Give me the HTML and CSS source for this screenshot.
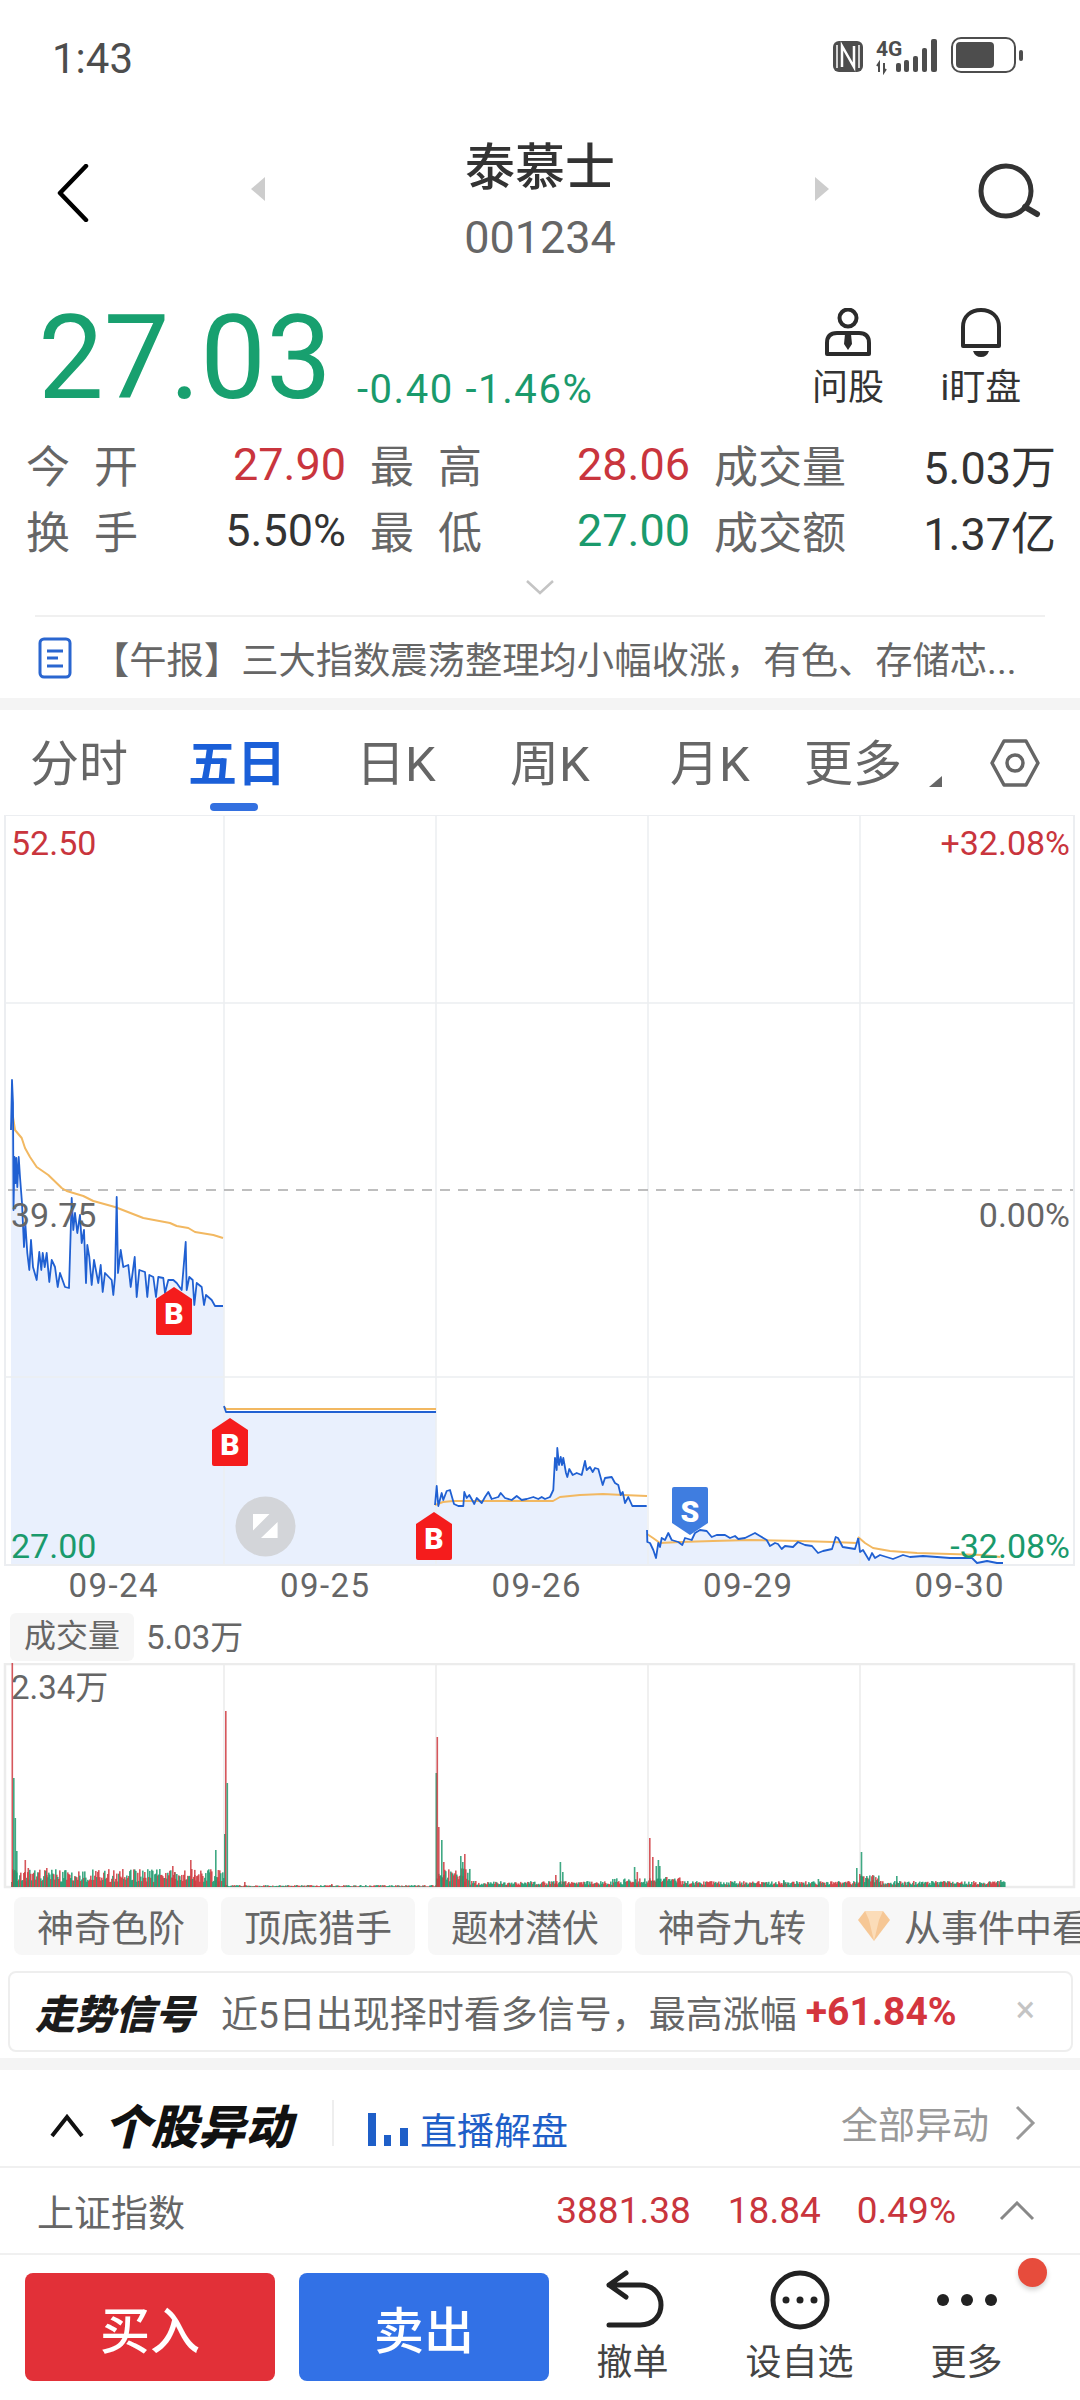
FILE: index.html
```html
<!DOCTYPE html>
<html lang="zh-CN">
<head>
    <meta charset="UTF-8">
    <meta name="viewport" content="width=device-width, initial-scale=1.0">
    <title>泰慕士 001234</title>
    <link rel="stylesheet" href="styles.css">
</head>
<body>
    <div class="status-bar">
        <span class="status-time">1:43</span>
        <svg class="status-icons" width="194" height="40" viewBox="830 36 194 40">
            <rect x="834" y="42" width="30" height="31" rx="6" fill="#4d4d4d"/>
            <path d="M838 46V69M860 46V69" stroke="#fff" stroke-width="1.5"/>
            <path d="M843 68V47L855 68V47" fill="none" stroke="#fff" stroke-width="2.5"/>
            <text x="877" y="57" class="status-4g">4G</text>
            <path d="M880 73V64l-2 3M885 64v9l2-3" fill="none" stroke="#4d4d4d" stroke-width="2"/>
            <g fill="#4d4d4d">
                <rect x="897" y="64" width="5" height="9" rx="2"/>
                <rect x="905" y="61" width="5" height="12" rx="2"/>
                <rect x="914" y="57" width="5" height="16" rx="2"/>
                <rect x="923" y="49" width="5" height="24" rx="2"/>
                <rect x="932" y="40" width="6" height="33" rx="2"/>
                <rect x="957" y="43" width="38" height="26" rx="4"/>
                <rect x="1020" y="51" width="4" height="11" rx="2"/>
            </g>
            <rect x="953" y="39" width="63" height="34" rx="9" fill="none" stroke="#4d4d4d" stroke-width="2"/>
        </svg>
    </div>

    <div class="title-bar">
        <svg class="back-icon" width="32" height="58" viewBox="0 0 32 58"><path d="M29 2L3 29L29 56" fill="none" stroke="#000" stroke-width="4.5" stroke-linecap="round" stroke-linejoin="round"/></svg>
        <div class="title-center">
            <span class="tri-left"></span>
            <div class="title-text">
                <div class="stock-name">泰慕士</div>
                <div class="stock-code">001234</div>
            </div>
            <span class="tri-right"></span>
        </div>
        <svg class="search-icon" width="66" height="60" viewBox="0 0 66 60"><circle cx="29" cy="29" r="25" fill="none" stroke="#333" stroke-width="5"/><path d="M48 45L60 52" stroke="#333" stroke-width="6" stroke-linecap="round"/></svg>
    </div>

    <div class="price-row">
        <span class="price">27.03</span>
        <span class="price-change">-0.40 -1.46%</span>
        <div class="price-action ask">
            <svg width="48" height="50" viewBox="0 0 48 50">
                <circle cx="24" cy="10" r="8.5" fill="none" stroke="#2b2b2b" stroke-width="4"/>
                <path d="M3 46V35Q3 25 13 25H35Q45 25 45 35V46Z" fill="none" stroke="#2b2b2b" stroke-width="4" stroke-linejoin="round"/>
                <path d="M21 26H27L28 36L24 42L20 36Z" fill="#2b2b2b"/>
            </svg>
            <span>问股</span>
        </div>
        <div class="price-action bell">
            <svg width="40" height="50" viewBox="0 0 40 50">
                <path d="M2 38V19C2 8 10 2 20 2S38 8 38 19V38Z" fill="none" stroke="#2b2b2b" stroke-width="4" stroke-linejoin="round"/>
                <path d="M12 43H28Q26 49 20 49T12 43Z" fill="#2b2b2b"/>
            </svg>
            <span>i盯盘</span>
        </div>
    </div>

    <div class="stats">
        <div class="stat"><span class="stat-label spaced">今 开</span><span class="stat-value red">27.90</span></div>
        <div class="stat"><span class="stat-label spaced">最 高</span><span class="stat-value red">28.06</span></div>
        <div class="stat"><span class="stat-label">成交量</span><span class="stat-value">5.03万</span></div>
        <div class="stat"><span class="stat-label spaced">换 手</span><span class="stat-value">5.50%</span></div>
        <div class="stat"><span class="stat-label spaced">最 低</span><span class="stat-value green">27.00</span></div>
        <div class="stat"><span class="stat-label">成交额</span><span class="stat-value">1.37亿</span></div>
    </div>

    <div class="expand">
        <svg width="30" height="16" viewBox="0 0 30 16"><path d="M2 2L15 14L28 2" fill="none" stroke="#c4c4c4" stroke-width="2.5"/></svg>
    </div>

    <div class="news">
        <svg width="34" height="42" viewBox="0 0 34 42">
            <rect x="2" y="2" width="30" height="38" rx="4" fill="none" stroke="#2a66d0" stroke-width="3"/>
            <path d="M9 14H25M9 21H20M9 29H25" stroke="#2a66d0" stroke-width="3"/>
        </svg>
        <span class="news-text">【午报】三大指数震荡整理均小幅收涨，有色、存储芯...</span>
    </div>

    <div class="band"></div>

    <div class="tabs">
        <span class="tab">分时</span>
        <span class="tab active">五日</span>
        <span class="tab">日K</span>
        <span class="tab">周K</span>
        <span class="tab">月K</span>
        <span class="tab more">更多</span>
        <svg class="hex-icon" width="50" height="48" viewBox="0 0 50 48">
            <path d="M14 2H36L48 24L36 46H14L2 24Z" fill="none" stroke="#666" stroke-width="3.5" stroke-linejoin="round"/>
            <circle cx="25" cy="24" r="8" fill="none" stroke="#666" stroke-width="3.5"/>
        </svg>
    </div>

    <div class="chart">
        <svg class="chart-svg" width="1080" height="752" viewBox="0 815 1080 752">
            <!-- area under the price line, one polygon per day -->
            <g fill="#e9f0fd">
                <polygon points="11,1565 11,1130 12,1080 13,1103 13.5,1210 14.5,1157 15.5,1183 16.3,1158 17.3,1187 18.7,1157 20,1177 22,1203 24,1247 25.3,1223 27.3,1253 29.3,1270 31,1240 33,1267 36.7,1280 39.3,1252 41.3,1270 42.7,1253 44.7,1267 46.7,1253 49.3,1282 51.7,1260 55,1267 57.7,1287 60,1273 65,1287 69,1288 71.7,1198 73.3,1230 75,1213 77.3,1233 80,1215 81.7,1243 84,1230 86,1283 87.3,1245 89.3,1257 91.7,1285 94,1260 98.3,1283 100.7,1265 102.7,1292 105,1273 111.7,1280 113.3,1295 115,1277 116.7,1197 118,1273 120.7,1250 123.3,1267 128.3,1265 130.7,1287 134.7,1257 136.7,1297 139.3,1270 145,1272 147.3,1297 149.3,1275 153.3,1277 156,1297 158.3,1277 163.3,1278 165,1293 168.3,1280 173.3,1280 176.7,1283 181.7,1290 185.7,1242 186.7,1290 189.3,1277 192.7,1280 194.3,1305 196.7,1283 201.7,1287 204,1305 206,1295 211.7,1300 215,1306 224,1306 224,1565"/>
                <polygon points="224,1565 224,1412 436,1412 436,1565"/>
                <polygon points="436,1565 436,1505 436.7,1486 438.3,1506 441.7,1493 443.3,1500 446.7,1491 450,1490 454,1504 458.3,1506 463.3,1506 464.3,1492 466.7,1498 469.3,1495 472.7,1501 474.3,1504 476.7,1498 481.7,1503 485,1497 488.3,1492 491.7,1499 498.3,1497 500.7,1493 505,1498 511.7,1500 516.7,1496 521.7,1500 526.7,1499 533.3,1497 538.3,1499 541.7,1497 545,1499 550,1497 553.3,1490 555,1458 556.7,1470 557.3,1448 559,1465 560.7,1457 562,1465 563.3,1458 566,1473 567.3,1477 569.3,1469 572.7,1475 576.7,1473 581.7,1475 585,1461 586.7,1470 590,1467 592.7,1472 595,1468 598.3,1469 602.7,1485 605,1478 611.7,1477 615,1483 618.3,1485 620.7,1495 622.7,1492 625,1503 628.3,1497 632.3,1506 647,1506 647,1565"/>
                <polygon points="647,1565 647,1530 647.3,1542 650,1543 653.3,1550 656,1558 658.3,1543 660,1547 661.7,1538 665,1540 668.3,1533 671.7,1540 678.3,1542 682.3,1545 685,1538 691.7,1540 695,1533 700,1530 706.7,1531 711.7,1537 716.7,1535 725,1535 730,1538 735,1536 738.3,1539 745,1538 755,1533 760,1536 766.7,1540 770,1546 775,1543 778,1544 781.7,1549 785,1546 793,1547 798,1542 805,1545 812,1546 818,1553 823,1551 832,1549 835.7,1537 838,1538 842.7,1547 855,1549 858.3,1538 860,1552 860,1565"/>
                <polygon points="860,1565 860,1552 863,1550 869,1560 872,1553 875,1558 880,1555 893,1559 903,1555 910,1557 923,1556 937,1557 950,1558 963,1558 972,1558 977,1563 987,1561 997,1563 1003,1563 1003,1565"/>
            </g>
            <!-- grid -->
            <g fill="none" stroke="#eceef1" stroke-width="1.5">
                <rect x="5" y="815" width="1069" height="750" stroke-width="2"/>
                <path d="M5 1003H1074M5 1377H1074M224 815V1565M436 815V1565M648 815V1565M860 815V1565"/>
            </g>
            <path d="M8 1190H1073" stroke="#a9a9a9" stroke-width="1.5" stroke-dasharray="10 8"/>
            <!-- average line -->
            <g fill="none" stroke="#f2b861" stroke-width="2" stroke-linejoin="round">
                <polyline points="11,1130 12.7,1115 15,1130 21.7,1138 25,1148 30,1157 36.7,1167 48.3,1175 61.7,1188 66.7,1191 83.3,1196 93.3,1201 115,1207 143.3,1218 170,1223 176.7,1226 188.3,1228 195,1232 213.3,1235 223,1238"/>
                <polyline points="224,1407 226,1409 436,1409"/>
                <polyline points="435,1505 443,1502 453,1501 473,1501 513,1501 553,1501 560,1497 580,1495 603,1494 623,1495 647,1496"/>
                <polyline points="647,1534 653,1538 660,1543 680,1542 713,1541 750,1540 800,1541 833,1542 857,1543"/>
                <polyline points="858,1537 865,1543 873,1548 890,1551 917,1553 950,1554 983,1555 1000,1557"/>
            </g>
            <!-- price line -->
            <g fill="none" stroke="#2060d2" stroke-width="1.8" stroke-linejoin="round">
                <polyline points="11,1130 12,1080 13,1103 13.5,1210 14.5,1157 15.5,1183 16.3,1158 17.3,1187 18.7,1157 20,1177 22,1203 24,1247 25.3,1223 27.3,1253 29.3,1270 31,1240 33,1267 36.7,1280 39.3,1252 41.3,1270 42.7,1253 44.7,1267 46.7,1253 49.3,1282 51.7,1260 55,1267 57.7,1287 60,1273 65,1287 69,1288 71.7,1198 73.3,1230 75,1213 77.3,1233 80,1215 81.7,1243 84,1230 86,1283 87.3,1245 89.3,1257 91.7,1285 94,1260 98.3,1283 100.7,1265 102.7,1292 105,1273 111.7,1280 113.3,1295 115,1277 116.7,1197 118,1273 120.7,1250 123.3,1267 128.3,1265 130.7,1287 134.7,1257 136.7,1297 139.3,1270 145,1272 147.3,1297 149.3,1275 153.3,1277 156,1297 158.3,1277 163.3,1278 165,1293 168.3,1280 173.3,1280 176.7,1283 181.7,1290 185.7,1242 186.7,1290 189.3,1277 192.7,1280 194.3,1305 196.7,1283 201.7,1287 204,1305 206,1295 211.7,1300 215,1306 223,1306"/>
                <polyline points="224,1406 226,1412 436,1412"/>
                <polyline points="435,1505 436.7,1486 438.3,1506 441.7,1493 443.3,1500 446.7,1491 450,1490 454,1504 458.3,1506 463.3,1506 464.3,1492 466.7,1498 469.3,1495 472.7,1501 474.3,1504 476.7,1498 481.7,1503 485,1497 488.3,1492 491.7,1499 498.3,1497 500.7,1493 505,1498 511.7,1500 516.7,1496 521.7,1500 526.7,1499 533.3,1497 538.3,1499 541.7,1497 545,1499 550,1497 553.3,1490 555,1458 556.7,1470 557.3,1448 559,1465 560.7,1457 562,1465 563.3,1458 566,1473 567.3,1477 569.3,1469 572.7,1475 576.7,1473 581.7,1475 585,1461 586.7,1470 590,1467 592.7,1472 595,1468 598.3,1469 602.7,1485 605,1478 611.7,1477 615,1483 618.3,1485 620.7,1495 622.7,1492 625,1503 628.3,1497 632.3,1506 646.7,1506"/>
                <polyline points="647,1530 647.3,1542 650,1543 653.3,1550 656,1558 658.3,1543 660,1547 661.7,1538 665,1540 668.3,1533 671.7,1540 678.3,1542 682.3,1545 685,1538 691.7,1540 695,1533 700,1530 706.7,1531 711.7,1537 716.7,1535 725,1535 730,1538 735,1536 738.3,1539 745,1538 755,1533 760,1536 766.7,1540 770,1546 775,1543 778,1544 781.7,1549 785,1546 793,1547 798,1542 805,1545 812,1546 818,1553 823,1551 832,1549 835.7,1537 838,1538 842.7,1547 855,1549 858.3,1538"/>
                <polyline points="858.3,1538 860,1552 863,1550 869,1560 872,1553 875,1558 880,1555 893,1559 903,1555 910,1557 923,1556 937,1557 950,1558 963,1558 972,1558 977,1563 987,1561 997,1563 1003,1563"/>
            </g>
            <!-- buy / sell markers -->
            <g class="marker">
                <path d="M0 12L18 0L36 12V46Q36 48 34 48H2Q0 48 0 46Z" transform="translate(156 1287)" fill="#f51c1c"/>
                <text x="174" y="1324">B</text>
                <path d="M0 12L18 0L36 12V46Q36 48 34 48H2Q0 48 0 46Z" transform="translate(212 1418)" fill="#f51c1c"/>
                <text x="230" y="1455">B</text>
                <path d="M0 12L18 0L36 12V46Q36 48 34 48H2Q0 48 0 46Z" transform="translate(416 1512)" fill="#f51c1c"/>
                <text x="434" y="1549">B</text>
                <path d="M2 0H34Q36 0 36 2V36L18 48L0 36V2Q0 0 2 0Z" transform="translate(672 1487)" fill="#3f7de0"/>
                <text x="690" y="1522">S</text>
            </g>
            <circle cx="265.5" cy="1526.5" r="30" fill="#d3d5d9"/>
            <path d="M253 1514H269.5L253 1530.5ZM277.6 1522V1538H261Z" fill="#fff"/>
        </svg>
        <span class="axis-label left top red">52.50</span>
        <span class="axis-label right top red">+32.08%</span>
        <span class="axis-label left mid">39.75</span>
        <span class="axis-label right mid">0.00%</span>
        <span class="axis-label left bottom green">27.00</span>
        <span class="axis-label right bottom green">-32.08%</span>
    </div>

    <div class="dates">
        <span>09-24</span><span>09-25</span><span>09-26</span><span>09-29</span><span>09-30</span>
    </div>

    <div class="volume-head">
        <span class="volume-pill">成交量</span>
        <span class="volume-value">5.03万</span>
    </div>

    <div class="volume">
        <svg id="volumeChart" class="volume-svg" width="1080" height="226" viewBox="0 1663 1080 226">
            <g fill="none" stroke="#ececec" stroke-width="1.5">
                <path d="M224 1663V1887M436 1663V1887M648 1663V1887M860 1663V1887"/>
                <rect x="5" y="1664" width="1069" height="223" stroke-width="2.5"/>
            </g>
        </svg>
        <span class="volume-max">2.34万</span>
    </div>

    <div class="chips">
        <span class="chip">神奇色阶</span>
        <span class="chip">顶底猎手</span>
        <span class="chip">题材潜伏</span>
        <span class="chip">神奇九转</span>
        <span class="chip chip-last">
            <svg width="32" height="30" viewBox="0 0 32 30"><path d="M7 0H25L32 9L16 30L0 9Z" fill="#f6c795"/><path d="M7 0L11 9L16 30L21 9L25 0Z" fill="#fbdcb8"/></svg>
            从事件中看
        </span>
    </div>

    <div class="signal">
        <span class="signal-title">走势信号</span>
        <span class="signal-text">近5日出现择时看多信号，最高涨幅</span>
        <span class="signal-pct">+61.84%</span>
        <span class="signal-close">×</span>
    </div>

    <div class="band band-low"></div>

    <div class="section-head">
        <svg class="fold-icon" width="36" height="24" viewBox="0 0 36 24"><path d="M3 22L18 3L33 22" fill="none" stroke="#111" stroke-width="4"/></svg>
        <span class="section-title">个股异动</span>
        <span class="section-sep"></span>
        <svg class="live-icon" width="42" height="33" viewBox="0 0 42 33"><path d="M1 0H9V33H1ZM17 22H24V33H17ZM33 15H41V33H33Z" fill="#1f5fc8"/></svg>
        <span class="live-text">直播解盘</span>
        <span class="all-moves">全部异动</span>
        <svg width="22" height="36" viewBox="0 0 22 36"><path d="M3 2L19 18L3 34" fill="none" stroke="#999" stroke-width="3"/></svg>
    </div>

    <div class="index-row">
        <span class="index-name">上证指数</span>
        <span class="index-num index-price">3881.38</span>
        <span class="index-num index-diff">18.84</span>
        <span class="index-num index-pct">0.49%</span>
        <svg width="36" height="20" viewBox="0 0 36 20"><path d="M2 18L18 2L34 18" fill="none" stroke="#888" stroke-width="3"/></svg>
    </div>

    <div class="bottom-bar">
        <button class="trade-btn buy">买入</button>
        <button class="trade-btn sell">卖出</button>
        <div class="tool">
            <svg width="62" height="60" viewBox="0 0 62 60"><path d="M24 3L7 15L24 27M7 15H38C66 15 66 55 38 55H7" fill="none" stroke="#222" stroke-width="5" stroke-linecap="round" stroke-linejoin="round"/></svg>
            <span>撤单</span>
        </div>
        <div class="tool">
            <svg width="62" height="60" viewBox="0 0 62 60"><circle cx="31" cy="30" r="27" fill="none" stroke="#222" stroke-width="5"/><circle cx="17" cy="30" r="3.5" fill="#222"/><circle cx="31" cy="30" r="3.5" fill="#222"/><circle cx="45" cy="30" r="3.5" fill="#222"/></svg>
            <span>设自选</span>
        </div>
        <div class="tool">
            <svg width="62" height="60" viewBox="0 0 62 60"><circle cx="7" cy="30" r="6" fill="#222"/><circle cx="31" cy="30" r="6" fill="#222"/><circle cx="55" cy="30" r="6" fill="#222"/></svg>
            <span>更多</span>
        </div>
        <span class="red-dot"></span>
    </div>

    <script src="chart.js"></script>
</body>
</html>
```

FILE: styles.css
```css
* {
    box-sizing: border-box;
}
body {
    margin: 0;
    width: 1080px;
    height: 2400px;
    overflow: hidden;
    background: #fff;
    color: #333;
    font-family: Roboto, "Noto Sans CJK SC", sans-serif;
}
svg {
    display: block;
    flex: none;
}
.red { color: #c9353d; }
.green { color: #1a9a6c; }

/* status bar */
.status-bar {
    height: 110px;
    display: flex;
    justify-content: space-between;
    align-items: center;
    padding: 6px 57px 0 52px;
}
.status-time {
    font-size: 42px;
    color: #4d4d4d;
}
.status-icons {
    margin-top: -6px;
}
.status-4g {
    font-size: 21px;
    font-weight: 700;
    fill: #4d4d4d;
}

/* title */
.title-bar {
    height: 165px;
    display: flex;
    align-items: center;
    justify-content: space-between;
    padding: 0 37px 0 57px;
}
.title-center {
    display: flex;
    align-items: center;
    width: 578px;
    justify-content: space-between;
    margin-left: 14px;
}
.tri-left, .tri-right {
    width: 0;
    height: 0;
    border-top: 12px solid transparent;
    border-bottom: 12px solid transparent;
    margin-top: -8px;
}
.tri-left { border-right: 14px solid #cdcdcd; }
.tri-right { border-left: 14px solid #cdcdcd; }
.title-text {
    text-align: center;
    margin-top: 16px;
}
.stock-name {
    font-size: 50px;
    font-weight: 500;
    line-height: 60px;
}
.stock-code {
    font-size: 45px;
    line-height: 50px;
    margin-top: 15px;
    color: #666;
}
.search-icon {
    margin-top: -2px;
}

/* price */
.price-row {
    height: 156px;
    display: flex;
    align-items: flex-end;
    padding: 0 0 16px 38px;
}
.price {
    font-size: 117px;
    line-height: 114px;
    color: #18a06f;
}
.price-change {
    font-size: 40px;
    line-height: 44px;
    letter-spacing: 1.6px;
    margin-left: 25px;
    margin-bottom: 3px;
    color: #1a9a6c;
}
.price-action {
    display: flex;
    flex-direction: column;
    align-items: center;
    font-size: 36px;
    line-height: 50px;
    margin-bottom: 2px;
}
.price-action svg {
    margin-bottom: 5px;
}
.price-action.ask {
    margin-left: auto;
    width: 80px;
}
.price-action.bell {
    margin-left: 48px;
    margin-right: 54px;
    width: 90px;
}

/* open / high / low table */
.stats {
    display: grid;
    grid-template-columns: 320px 320px 342px;
    column-gap: 24px;
    grid-auto-rows: 66px;
    padding-left: 26px;
}
.stat {
    display: flex;
    justify-content: space-between;
    align-items: center;
}
.stat-label {
    font-size: 44px;
    color: #666;
}
.stat-label.spaced {
    width: 112px;
    text-align: justify;
    text-align-last: justify;
}
.stat-value {
    font-size: 45px;
}
.stat-value.red { color: #c9353d; }
.stat-value.green { color: #1a9a6c; }
.expand {
    height: 54px;
    margin: 0 35px;
    display: flex;
    justify-content: center;
    padding-top: 16px;
    border-bottom: 2px solid #f0f0f0;
}
.news {
    height: 81px;
    display: flex;
    align-items: center;
    padding-left: 38px;
}
.news-text {
    font-size: 37.3px;
    color: #666;
    margin-left: 20px;
    white-space: nowrap;
}
.band {
    height: 12px;
    background: #f4f4f4;
}

/* tabs */
.tabs {
    height: 105px;
    display: grid;
    grid-template-columns: 158px 168px 154px 160px 134px 186px 50px;
    align-items: center;
    padding: 0 0 6px 30px;
}
.tab {
    position: relative;
    font-size: 49px;
    color: #666;
    white-space: nowrap;
}
.tab.active {
    font-weight: 700;
    color: #1a5fd8;
}
.tab.active::after {
    content: "";
    position: absolute;
    left: 22px;
    bottom: -16px;
    width: 48px;
    height: 8px;
    border-radius: 4px;
    background: #3370e0;
}
.tab.more::after {
    content: "";
    position: absolute;
    left: 125px;
    bottom: 8px;
    width: 0;
    height: 0;
    border-left: 13px solid transparent;
    border-bottom: 11px solid #666;
}
.hex-icon {
    margin-top: 6px;
}

/* price chart */
.chart {
    position: relative;
    height: 752px;
}
.chart-svg {
    position: absolute;
    left: 0;
    top: 0;
}
.marker text {
    font-size: 30px;
    font-weight: 900;
    fill: #fff;
    text-anchor: middle;
}
.axis-label {
    position: absolute;
    font-size: 34px;
    line-height: 40px;
    color: #666;
}
.axis-label.red { color: #c9353d; }
.axis-label.green { color: #1a9a6c; }
.axis-label.left { left: 11px; }
.axis-label.right { right: 10px; }
.axis-label.top { top: 8px; }
.axis-label.mid { top: 380px; }
.axis-label.bottom { top: 711px; }
.dates {
    height: 38px;
    display: grid;
    grid-template-columns: repeat(5, 211.5px);
    padding-left: 8px;
    font-size: 33px;
    line-height: 38px;
    letter-spacing: 1.4px;
    text-align: center;
    color: #666;
}

/* volume */
.volume-head {
    height: 58px;
    display: flex;
    align-items: center;
    padding: 6px 0 0 10px;
}
.volume-pill {
    width: 124px;
    height: 48px;
    line-height: 46px;
    text-align: center;
    font-size: 32px;
    color: #666;
    background: #f6f6f6;
    border-radius: 6px;
}
.volume-value {
    font-size: 33px;
    margin-left: 12px;
    margin-top: -4px;
    color: #666;
}
.volume {
    position: relative;
    height: 226px;
}
.volume-max {
    position: absolute;
    left: 11px;
    top: 5px;
    font-size: 33px;
    line-height: 40px;
    color: #666;
}

/* strategy chips */
.chips {
    margin-top: 8px;
    height: 58px;
    display: flex;
    gap: 13px;
    padding-left: 14px;
    overflow: hidden;
}
.chip {
    flex: none;
    width: 194px;
    height: 58px;
    display: flex;
    align-items: center;
    justify-content: center;
    gap: 14px;
    font-size: 37px;
    color: #666;
    background: #f7f7f7;
    border-radius: 8px;
    white-space: nowrap;
}
.chip-last {
    width: 280px;
    justify-content: flex-start;
    padding-left: 16px;
}

/* signal card */
.signal {
    margin: 16px 7px 6px 8px;
    height: 81px;
    display: flex;
    align-items: center;
    padding-left: 25px;
    border: 2px solid #eeeeee;
    border-radius: 8px;
}
.signal-title {
    width: 186px;
    font-size: 40px;
    font-weight: 900;
    font-style: italic;
    color: #1c1c1c;
    white-space: nowrap;
}
.signal-text {
    font-size: 37px;
    color: #666;
    white-space: nowrap;
}
.signal-pct {
    font-size: 39px;
    font-weight: 700;
    margin-left: 9px;
    color: #d4353d;
}
.signal-close {
    margin-left: 59px;
    margin-top: -4px;
    font-size: 36px;
    color: #c4c4c4;
}
.band-low {
    height: 12px;
}

/* section header */
.section-head {
    height: 98px;
    display: flex;
    align-items: center;
    padding: 10px 44px 0 49px;
    border-bottom: 2px solid #f0f0f0;
}
.fold-icon {
    margin-top: 5px;
}
.section-title {
    font-size: 47px;
    font-weight: 900;
    font-style: italic;
    color: #111;
    margin-left: 19px;
    white-space: nowrap;
}
.section-sep {
    width: 2px;
    height: 46px;
    margin-left: 40px;
    background: #eeeeee;
}
.live-icon {
    margin-left: 33px;
    margin-top: 12px;
}
.live-text {
    font-size: 37px;
    color: #1f5fc8;
    margin-left: 11px;
    margin-top: 12px;
}
.all-moves {
    margin-left: auto;
    margin-right: 25px;
    font-size: 37px;
    color: #999;
}
.index-row {
    height: 87px;
    display: flex;
    align-items: center;
    padding: 0 45px 0 37px;
    border-bottom: 2px solid #f0f0f0;
}
.index-name {
    font-size: 37px;
    color: #666;
}
.index-num {
    font-size: 37px;
    color: #c9353d;
}
.index-price { margin-left: auto; }
.index-diff { margin-left: 37px; }
.index-pct { margin-left: 36px; margin-right: 43px; }

/* bottom bar */
.bottom-bar {
    position: relative;
    display: flex;
    padding: 18px 30px 0 25px;
}
.trade-btn {
    width: 250px;
    height: 108px;
    border: 0;
    border-radius: 8px;
    color: #fff;
    font-family: inherit;
    font-size: 50px;
    font-weight: 500;
}
.trade-btn.buy { background: #e23038; }
.trade-btn.sell { background: #3271e6; margin-left: 24px; }
.tool {
    width: 167px;
    display: flex;
    flex-direction: column;
    align-items: center;
    font-size: 36px;
    line-height: 50px;
    color: #444;
    margin-top: -3px;
}
.tool svg {
    margin-bottom: 8px;
}
.red-dot {
    position: absolute;
    left: 1018px;
    top: 3px;
    width: 29px;
    height: 29px;
    border-radius: 50%;
    background: #e74c3c;
    box-shadow: 0 3px 5px rgba(0, 0, 0, 0.18);
}
```

FILE: chart.js
```js
// volume bars: known peaks first, the small ones are filled in from a seeded generator
const svgNS = 'http://www.w3.org/2000/svg';
const volumeChart = document.getElementById('volumeChart');
const baseY = 1887;
const redBar = '#cf3a40';
const greenBar = '#1f9a6e';

const peaks = [
    [11.5, 1663, redBar], [13, 1778, greenBar], [14.5, 1818, greenBar], [16, 1851, greenBar],
    [24.5, 1860, redBar], [27.5, 1868, redBar], [46, 1868, redBar], [172, 1866, redBar],
    [174, 1872, redBar], [190, 1860, redBar], [194, 1875, redBar], [215, 1850, greenBar],
    [217.6, 1870, redBar], [224, 1834, greenBar], [225, 1711, redBar], [226.5, 1783, greenBar],
    [244, 1882, redBar], [331, 1884, redBar], [435.5, 1773, greenBar], [436.5, 1737, redBar],
    [438, 1827, redBar], [441, 1840, greenBar], [443, 1862, redBar], [460, 1856, greenBar],
    [462, 1862, greenBar], [464, 1854, redBar], [559.6, 1862, greenBar], [555, 1875, redBar],
    [562, 1872, greenBar], [633.8, 1867, greenBar], [636.5, 1872, redBar], [649, 1838, redBar],
    [652, 1857, redBar], [655.5, 1866, greenBar], [657.6, 1860, greenBar], [659, 1866, greenBar],
    [663, 1880, greenBar], [783, 1880, greenBar], [817.6, 1879, greenBar], [838, 1881, greenBar],
    [856, 1868, greenBar], [859, 1874, redBar], [860.7, 1852, greenBar], [866, 1876, greenBar],
    [872, 1875, redBar], [880, 1881, redBar], [896, 1876, greenBar], [921, 1882, greenBar],
    [960, 1884, greenBar], [979, 1882, greenBar], [997, 1881, greenBar], [1000, 1880, greenBar]
];

let seed = 41;
function nextRandom() {
    seed = (seed * 16807) % 2147483647;
    return seed / 2147483647;
}

function noiseHeight(x) {
    if (x < 224) return 5 + nextRandom() * 13;
    if (x < 436) return 0.5 + nextRandom() * 1.5;
    if (x < 470) return 5 + nextRandom() * 14;
    if (x < 648) return 2 + nextRandom() * (x > 610 ? 7 : 4);
    if (x < 680) return 4 + nextRandom() * 6;
    if (x < 860) return 2 + nextRandom() * 4;
    if (x < 880) return 4 + nextRandom() * 8;
    return 2 + nextRandom() * 4;
}

function addBar(x, topY, color) {
    const bar = document.createElementNS(svgNS, 'rect');
    bar.setAttribute('x', x);
    bar.setAttribute('y', topY);
    bar.setAttribute('width', 1.6);
    bar.setAttribute('height', baseY - topY);
    bar.setAttribute('fill', color);
    bar.setAttribute('fill-opacity', 0.85);
    volumeChart.appendChild(bar);
}

for (let x = 11; x < 1005; x += 1) {
    addBar(x, baseY - noiseHeight(x), nextRandom() > 0.5 ? redBar : greenBar);
}
peaks.forEach(peak => addBar(peak[0], peak[1], peak[2]));
```
